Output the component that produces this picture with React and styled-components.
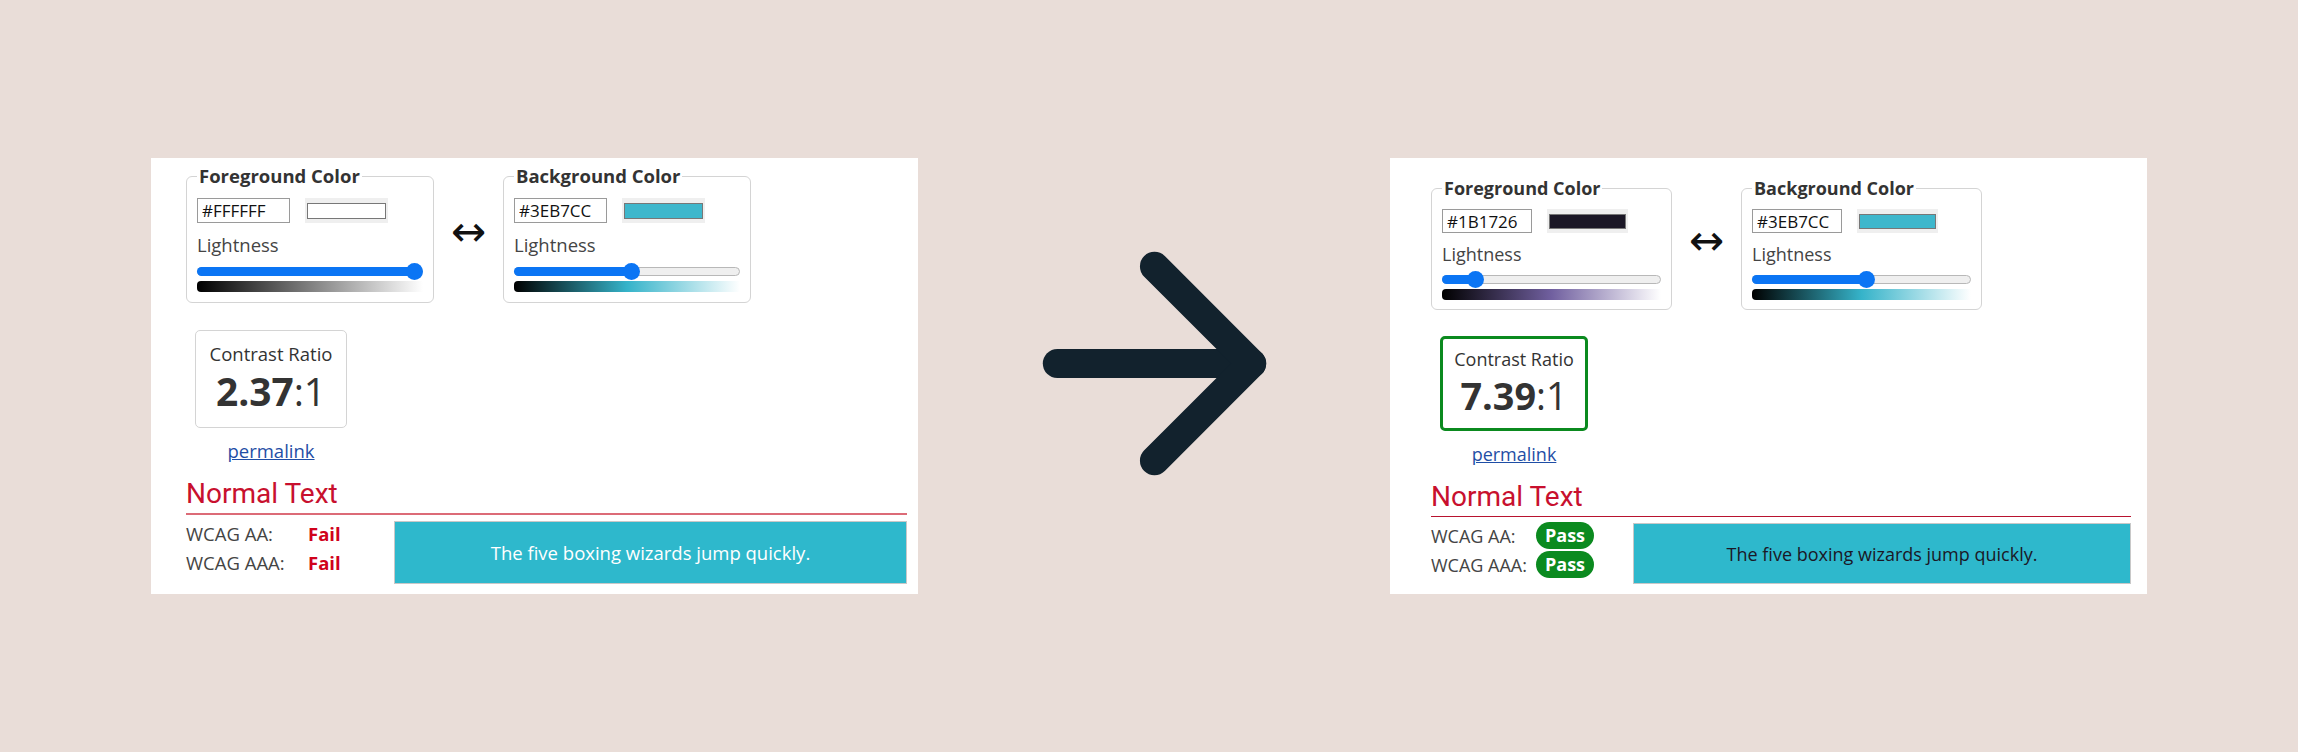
import React from "react";
import styled, { createGlobalStyle } from "styled-components";
import { ArrowRight } from "lucide-react";

const GlobalStyle = createGlobalStyle`
  html, body {
    margin: 0;
    padding: 0;
    background: #e9ddd8;
  }
  body {
    font-family: "Open Sans", "Liberation Sans", sans-serif;
    color: #333;
  }
`;

// data for the before / after shots
const before = {
  fg: { hex: "#FFFFFF", h: 0, s: 0, l: 100 },
  bg: { hex: "#3EB7CC", h: 189, s: 58, l: 52 },
  ratio: "2.37",
  pass: false,
};
const after = {
  fg: { hex: "#1B1726", h: 256, s: 25, l: 12 },
  bg: { hex: "#3EB7CC", h: 189, s: 58, l: 52 },
  ratio: "7.39",
  pass: true,
};

const ColorBox = ({ title, color, width, compact }) => {
  const pct = color.l / 100;
  return (
    <Field $w={width} $c={compact}>
      <Legend>{title}</Legend>
      <InputRow>
        <HexInput readOnly value={color.hex} $c={compact} />
        <Swatch $c={compact}>
          <SwatchFill $color={color.hex} />
        </Swatch>
      </InputRow>
      <Label $c={compact}>Lightness</Label>
      <Track $c={compact}>
        <Fill style={{ width: `calc(8px + (100% - 16px) * ${pct})` }} />
        <Thumb style={{ left: `calc((100% - 16px) * ${pct})` }} />
      </Track>
      <Gradient
        style={{
          background: `linear-gradient(to right, hsl(${color.h},${color.s}%,0%), hsl(${color.h},${color.s}%,50%), hsl(${color.h},${color.s}%,100%))`,
        }}
      />
    </Field>
  );
};

const CheckerPanel = ({ data, v }) => (
  <Panel $w={v.w} $pt={v.pt} $pl={v.pl} $pr={v.pr} $fs={v.fs}>
    <TopRow>
      <ColorBox title="Foreground Color" color={data.fg} width={v.fw} compact={v.compact} />
      <Swap>↔</Swap>
      <ColorBox title="Background Color" color={data.bg} width={v.fw} compact={v.compact} />
    </TopRow>
    <RatioWrap $mt={v.ratioTop}>
      <RatioBox $pass={data.pass} $w={v.rw} $h={v.rh}>
        <RatioTitle>Contrast Ratio</RatioTitle>
        <RatioValue>
          <b>{data.ratio}</b>:1
        </RatioValue>
      </RatioBox>
      <Permalink href="#" $w={v.rw}>
        permalink
      </Permalink>
    </RatioWrap>
    <Heading $thin={data.pass}>Normal Text</Heading>
    <ResultRow>
      <Results $lw={v.lw} $w={v.colW}>
        <span>WCAG AA:</span>
        {data.pass ? <Badge>Pass</Badge> : <FailText>Fail</FailText>}
        <span>WCAG AAA:</span>
        {data.pass ? <Badge>Pass</Badge> : <FailText>Fail</FailText>}
      </Results>
      <Sample $dark={data.pass} $h={v.sh}>
        The five boxing wizards jump quickly.
      </Sample>
    </ResultRow>
  </Panel>
);

export default function App() {
  return (
    <Page>
      <GlobalStyle />
      <CheckerPanel
        data={before}
        v={{ w: 767, pt: 6, pl: 35, pr: 11, fs: 18.5, fw: 248, ratioTop: 27, rw: 152, rh: 98, lw: 122, colW: 208, sh: 63 }}
      />
      <BigArrow>
        <ArrowRight size={333} strokeWidth={2.1} color="#12222d" />
      </BigArrow>
      <CheckerPanel
        data={after}
        v={{ w: 757, pt: 18, pl: 41, pr: 16, fs: 18, fw: 241, compact: true, ratioTop: 26, rw: 148, rh: 95, lw: 105, colW: 202, sh: 61 }}
      />
    </Page>
  );
}

const Page = styled.div`
  width: 2298px;
  height: 752px;
  box-sizing: border-box;
  padding: 158px 0 0 151px;
  display: flex;
  align-items: flex-start;
  gap: 70px;
`;

const BigArrow = styled.div`
  display: flex;
  margin-top: 39px;
  margin-right: -1px;
`;

const Panel = styled.section`
  width: ${(p) => p.$w}px;
  height: 436px;
  box-sizing: border-box;
  background: #fff;
  padding: ${(p) => p.$pt}px ${(p) => p.$pr}px 0 ${(p) => p.$pl}px;
  display: flex;
  flex-direction: column;
  font-size: ${(p) => p.$fs}px;
`;

const TopRow = styled.div`
  display: flex;
  align-items: center;
`;

const Field = styled.fieldset`
  width: ${(p) => p.$w}px;
  box-sizing: border-box;
  margin: 0;
  min-width: 0;
  padding: ${(p) => (p.$c ? "9px 10px 9px" : "10px 10px 10px")};
  border: 1px solid #d4d4d4;
  border-radius: 6px;
`;

const Legend = styled.legend`
  font-weight: 700;
  font-size: 1em;
  line-height: 24px;
  color: #333;
  padding: 0 2px;
`;

const InputRow = styled.div`
  display: flex;
  gap: 15px;
`;

const HexInput = styled.input`
  width: ${(p) => (p.$c ? 90 : 93)}px;
  height: ${(p) => (p.$c ? 24 : 25)}px;
  box-sizing: border-box;
  border: 1px solid #9a9a9a;
  border-radius: 0;
  padding: 0 4px;
  margin: 0;
  font-family: "Open Sans", sans-serif;
  font-size: 17px;
  color: #111;
  outline: none;
`;

const Swatch = styled.span`
  display: flex;
  width: ${(p) => (p.$c ? 81 : 83)}px;
  height: ${(p) => (p.$c ? 24 : 25)}px;
  box-sizing: border-box;
  padding: 5px 2px 4px 2px;
  background: #efefef;
`;

const SwatchFill = styled.span`
  flex: 1;
  border: 1px solid #777;
  background: ${(p) => p.$color};
`;

const Label = styled.div`
  margin-top: ${(p) => (p.$c ? 9 : 10)}px;
  line-height: 24px;
  color: #444;
`;

const Track = styled.div`
  position: relative;
  height: 9px;
  margin-top: ${(p) => (p.$c ? 9 : 10)}px;
  box-sizing: border-box;
  border: 1px solid #b8b8b8;
  border-radius: 5px;
  background: #efefef;
`;

const Fill = styled.div`
  position: absolute;
  left: -1px;
  top: -1px;
  bottom: -1px;
  border-radius: 5px;
  background: #0b75f4;
`;

const Thumb = styled.div`
  position: absolute;
  top: 50%;
  width: 17px;
  height: 17px;
  margin-top: -8.5px;
  border-radius: 50%;
  background: #0b75f4;
`;

const Gradient = styled.div`
  height: 11px;
  margin-top: 5px;
  border-radius: 4px 0 0 4px;
`;

const Swap = styled.span`
  width: 69px;
  text-align: center;
  font-family: "DejaVu Sans", sans-serif;
  font-size: 42px;
  line-height: 1;
  color: #111;
  margin-top: -4px;
`;

const RatioWrap = styled.div`
  margin: ${(p) => p.$mt}px 0 0 9px;
`;

const RatioBox = styled.div`
  width: ${(p) => p.$w}px;
  height: ${(p) => p.$h}px;
  box-sizing: border-box;
  border: ${(p) => (p.$pass ? "3px solid #0b8a1f" : "1px solid #d4d4d4")};
  border-radius: 5px;
  padding-top: ${(p) => (p.$pass ? 8 : 11)}px;
  text-align: center;
  color: #333;
`;

const RatioTitle = styled.div`
  line-height: 24px;
`;

const RatioValue = styled.div`
  margin-top: 3px;
  font-size: 2.1em;
  line-height: 44px;

  b {
    font-weight: 700;
  }
`;

const Permalink = styled.a`
  display: block;
  width: ${(p) => p.$w}px;
  margin-top: 11px;
  text-align: center;
  line-height: 24px;
  color: #1f4ea5;
  text-decoration: underline;
`;

const Heading = styled.h2`
  margin: 14px 0 0;
  padding-bottom: 2px;
  font-family: Roboto, "Open Sans", sans-serif;
  font-weight: 400;
  font-size: 28px;
  line-height: 34px;
  color: #c8102e;
  border-bottom: ${(p) => (p.$thin ? "1px solid #b8132f" : "2px solid #dc6b77")};
`;

const ResultRow = styled.div`
  display: flex;
  margin-top: 6px;
`;

const Results = styled.div`
  width: ${(p) => p.$w}px;
  margin-top: -2px;
  display: grid;
  grid-template-columns: ${(p) => p.$lw}px auto;
  grid-auto-rows: 29px;
  align-items: center;
  align-content: start;
  justify-items: start;
  color: #444;
`;

const FailText = styled.span`
  font-weight: 700;
  color: #d0021b;
`;

const Badge = styled.span`
  padding: 0 9px;
  border-radius: 14px;
  background: #0b8a1f;
  color: #fff;
  font-weight: 700;
  line-height: 27px;
`;

const Sample = styled.div`
  flex: 1;
  height: ${(p) => p.$h}px;
  box-sizing: border-box;
  display: flex;
  align-items: center;
  justify-content: center;
  background: #2eb8cc;
  border: 1px solid #c8c8c8;
  color: ${(p) => (p.$dark ? "#1b1726" : "#fff")};
`;
